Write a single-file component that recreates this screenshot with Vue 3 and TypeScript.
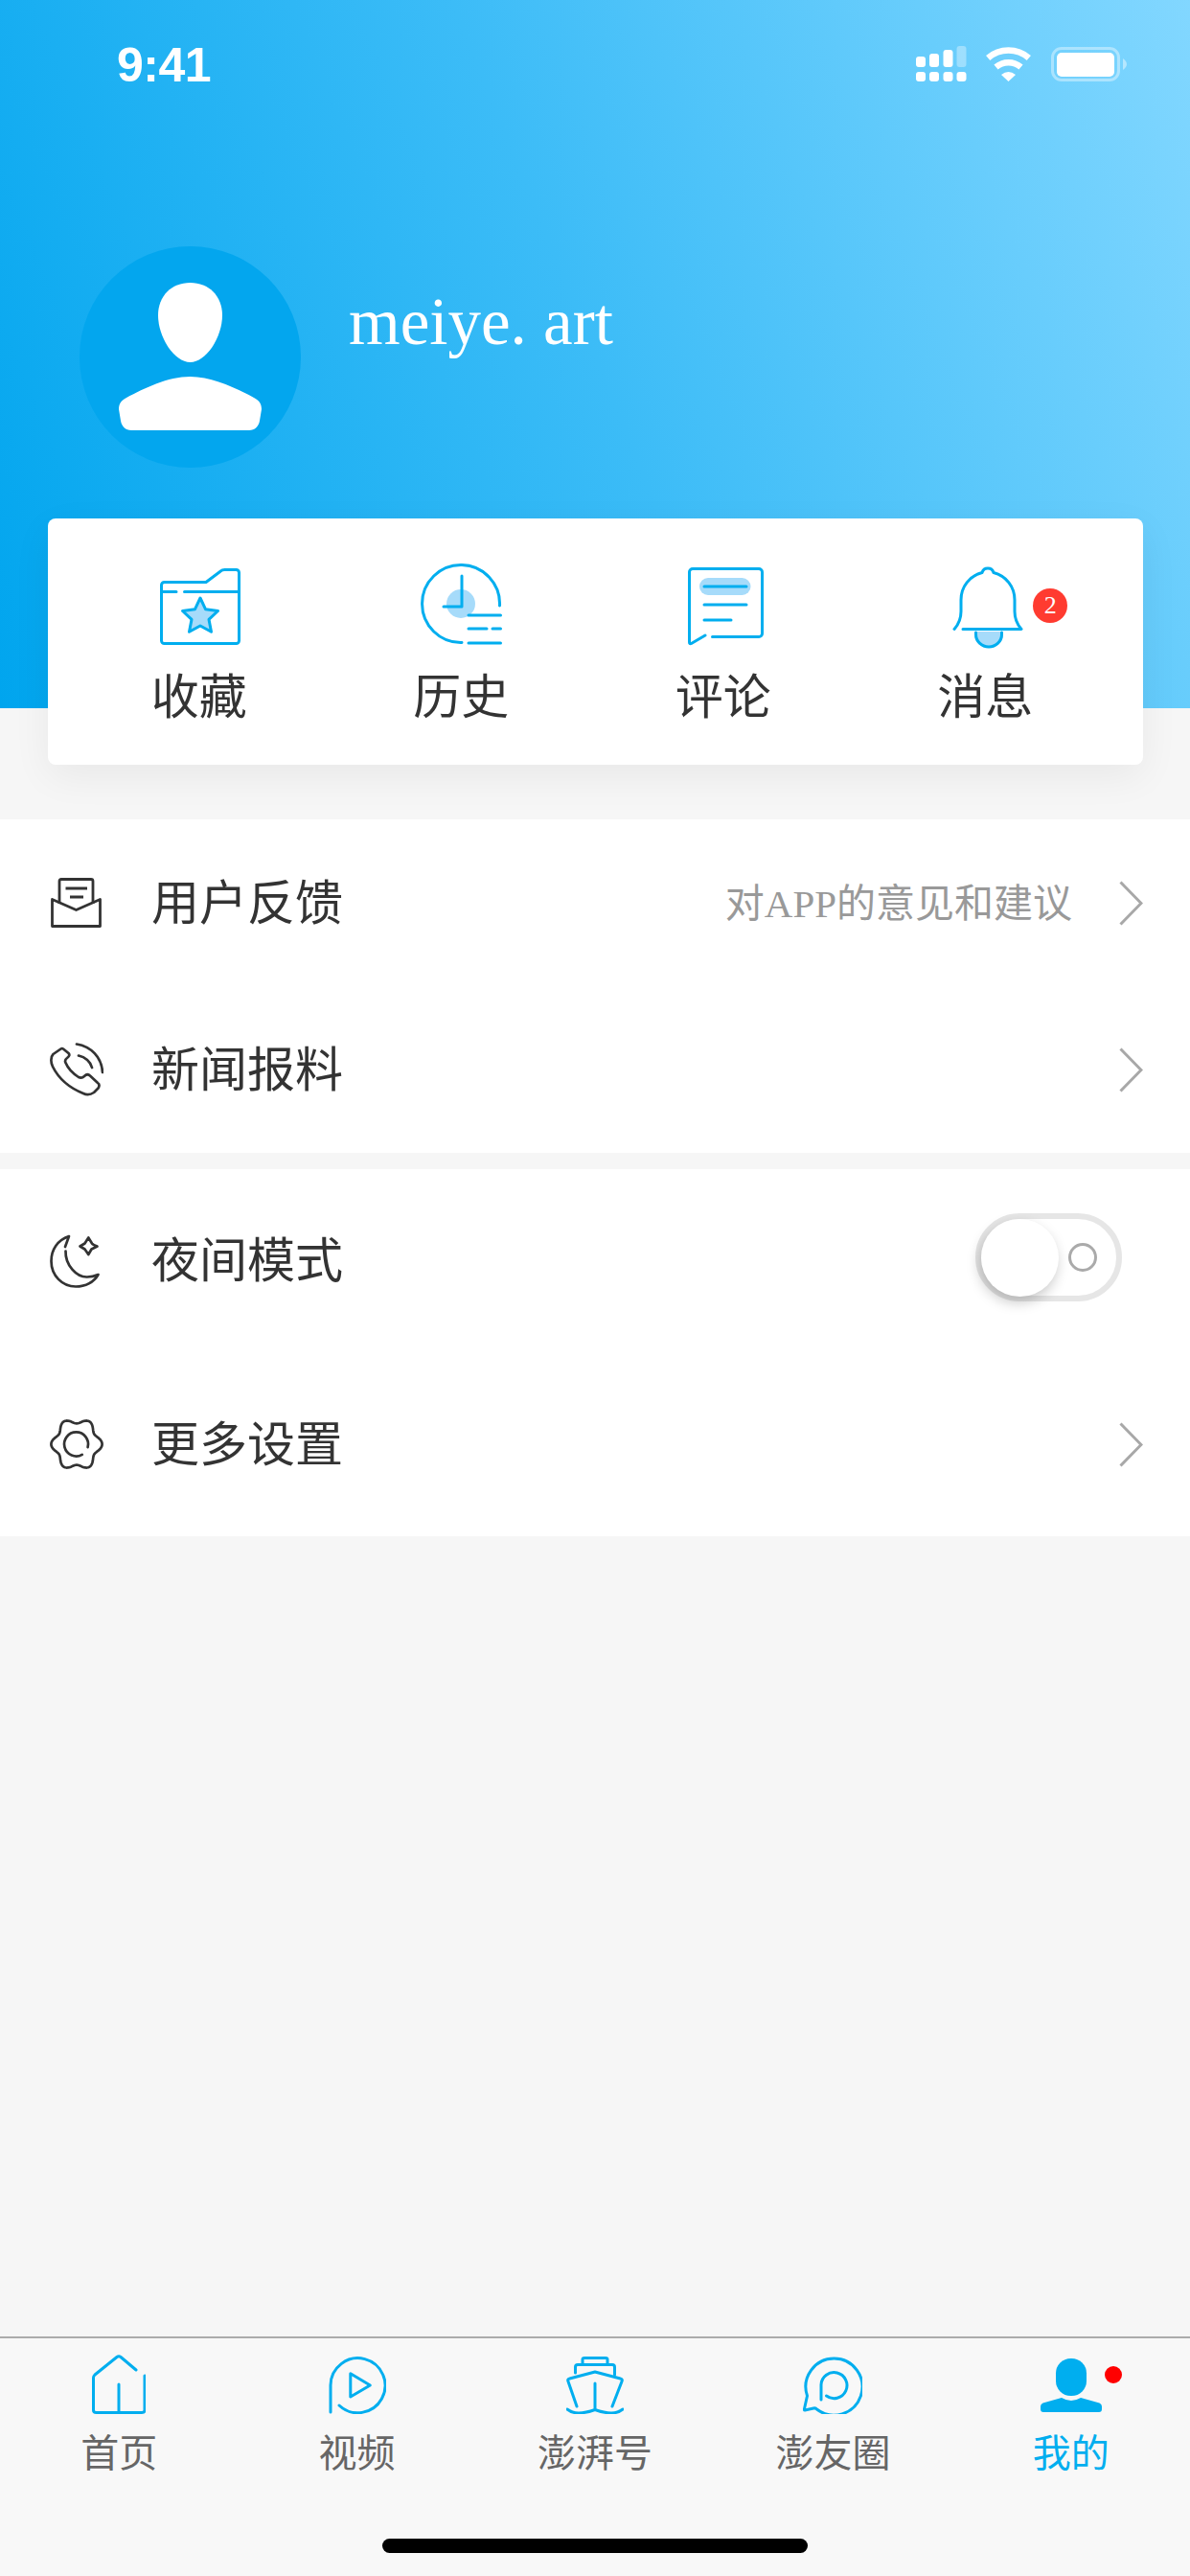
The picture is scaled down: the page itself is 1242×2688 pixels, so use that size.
<script setup lang="ts">
const gearPath: string = (() => {
  const pts: string[] = []
  for (let i = 0; i < 120; i++) {
    const t = (i / 120) * Math.PI * 2
    const r = 23.8 + 2.8 * Math.cos(6 * t)
    pts.push(`${(27 + r * Math.cos(t)).toFixed(2)} ${(26 + r * Math.sin(t) * 1.03).toFixed(2)}`)
  }
  return 'M' + pts.join('L') + 'Z'
})()
</script>

<template>
  <div class="page">
    <header class="hero">
      <div class="status">
        <span class="time">9:41</span>
        <div class="status-icons">
          <svg width="53" height="38" viewBox="0 0 53 38" class="i-signal">
            <g fill="#fff">
              <rect x="0" y="11" width="10" height="11" rx="3" />
              <rect x="14" y="8" width="10" height="14" rx="3" />
              <rect x="28.5" y="4" width="10" height="18" rx="3" />
              <rect x="42.5" y="0" width="10" height="22" rx="3" opacity=".35" />
              <rect x="0" y="27" width="10" height="10" rx="3" />
              <rect x="14" y="27" width="10" height="10" rx="3" />
              <rect x="28.5" y="27" width="10" height="10" rx="3" />
              <rect x="42.5" y="27" width="10" height="10" rx="3" />
            </g>
          </svg>
          <svg width="47" height="36" viewBox="0 0 47 36" class="i-wifi">
            <path d="M2.2 11.5A32.5 32.5 0 0 1 44.8 11.5M10.5 21A20 20 0 0 1 36.5 21" fill="none" stroke="#fff" stroke-width="6.5" />
            <path d="M16 29Q23.5 23 31 29L23.5 36Z" fill="#fff" />
          </svg>
          <svg width="80" height="36" viewBox="0 0 80 36" class="i-batt">
            <rect x="1.5" y="1.5" width="69" height="33" rx="9.5" fill="none" stroke="#fff" stroke-opacity=".4" stroke-width="3" />
            <rect x="6" y="6" width="60" height="25" rx="5" fill="#fff" />
            <path d="M75 12Q79 15 79 18Q79 21 75 24Z" fill="#fff" fill-opacity=".45" />
          </svg>
        </div>
      </div>
      <div class="profile">
        <div class="avatar">
          <svg width="231" height="231" viewBox="0 0 231 231">
            <path fill="#fff" d="M115.5 38C135 38 149 52 149 72C149 95 132 121 115.5 121C99 121 82 95 82 72C82 52 96 38 115.5 38Z" />
            <path fill="#fff" d="M115.5 136C92 136 68 148 49 158C43 161 41 165 41 170L43 182C44 188 48 192 54 192H177C183 192 187 188 188 182L190 170C190 165 188 161 182 158C163 148 139 136 115.5 136Z" />
          </svg>
        </div>
        <div class="name">meiye. art</div>
      </div>
    </header>

    <section class="card">
      <div class="card-item">
        <svg class="card-icon" width="86" height="90" viewBox="-2 -5 86 90" fill="none" stroke="#00aeef" stroke-width="3" stroke-linecap="round" stroke-linejoin="round">
          <path d="M4.5 14.5H48L63 3.2Q65 1.5 67.5 1.5H79.5A3 3 0 0 1 82.5 4.5V75.5A3 3 0 0 1 79.5 78.5H4.5A3 3 0 0 1 1.5 75.5V17.5A3 3 0 0 1 4.5 14.5Z" />
          <path d="M1.5 24.5H17M25.5 24.5H82.5" />
          <path fill="#a6dbfa" d="M42 31L47.6 42.8L60.5 44.5L51 53.4L53.5 66.3L42 60L30.5 66.3L33 53.4L23.5 44.5L36.4 42.8Z" />
        </svg>
        <span class="card-label">收藏</span>
      </div>
      <div class="card-item">
        <svg class="card-icon" width="85" height="90" viewBox="0 0 85 90" fill="none" stroke="#00aeef" stroke-width="3" stroke-linecap="round">
          <circle cx="42" cy="42" r="15" fill="#a6dbfa" stroke="none" />
          <path d="M82.5 44A40.5 40.5 0 1 0 43 82.5" />
          <path d="M43 13V45H24" stroke-linejoin="round" />
          <path d="M50 54H83.5M50 68H69M75 68H83.5M50 83H83.5" />
        </svg>
        <span class="card-label">历史</span>
      </div>
      <div class="card-item">
        <svg class="card-icon" width="86" height="90" viewBox="-6 -4 86 90" fill="none" stroke="#00aeef" stroke-width="3" stroke-linecap="round" stroke-linejoin="round">
          <rect x="12" y="11" width="53.5" height="18" rx="9" fill="#a6dbfa" stroke="none" />
          <path d="M25.5 72.5H74A3.5 3.5 0 0 0 77.5 69V5A3.5 3.5 0 0 0 74 1.5H5A3.5 3.5 0 0 0 1.5 5V78Q1.5 80.5 3.5 79.5L18 71" />
          <path d="M17 20H61M17 39H61M17 55H45" />
        </svg>
        <span class="card-label">评论</span>
      </div>
      <div class="card-item">
        <div class="bell-wrap">
          <svg class="card-icon" width="84" height="90" viewBox="-8 0 84 90" fill="none" stroke="#00aeef" stroke-width="3" stroke-linecap="round" stroke-linejoin="round">
            <path fill="#a6dbfa" stroke="none" d="M23 71H53V74A15 14 0 0 1 23 74Z" />
            <path d="M24.5 72V74A13.5 13 0 0 0 51.5 74V72" />
            <path d="M2 68.5C6 64 9 58 9 50V38C9 24 18 13 31 9.5A6.3 6.3 0 0 1 43 9.5C56 13 65 24 65 38V50C65 58 68 64 72 68.5H11" />
          </svg>
          <span class="badge">2</span>
        </div>
        <span class="card-label">消息</span>
      </div>
    </section>

    <section class="group group-a">
      <div class="row row-a">
        <svg class="row-icon" width="56" height="56" viewBox="-1 -2 56 56" fill="none" stroke="#333" stroke-width="2.8" stroke-linejoin="round">
          <path d="M1.5 22.5L26.5 33.5L51.5 22.5V50.5H1.5Z" />
          <path d="M9 27V3.5Q9 1.5 11 1.5H42Q44 1.5 44 3.5V27" />
          <path d="M15.5 11H38M20 20H34" />
        </svg>
        <span class="row-label">用户反馈</span>
        <span class="row-sub">对APP的意见和建议</span>
        <svg class="chev" width="25" height="47" viewBox="0 0 25 47"><path d="M1.5 1.5L23 23.5L1.5 45.5" fill="none" stroke="#a8a8a8" stroke-width="3" /></svg>
      </div>
      <div class="row row-a">
        <svg class="row-icon" width="56" height="56" viewBox="0 0 56 56" fill="none" stroke="#333" stroke-width="2.7" stroke-linecap="round" stroke-linejoin="round">
          <path d="M11.5 6.5L3.5 12C.5 15 1 21 3 25C9 37 20 47 35 53C39 55 43 54 46 52L50.5 47.5C52 45 51.5 43 50 42L42 34.5C40 32.5 38 33 36 35C34 37 32 37 30 36C24 32 19 27 16.5 21C15.5 19 16 17.5 18 16C20.5 14 21 12.5 19.5 11L14 6.5C13 5.8 12.5 5.8 11.5 6.5Z" />
          <path d="M28 1.5C43 4 54 15 55 31M30 13.5C37 15 42.5 20 44 26" />
        </svg>
        <span class="row-label">新闻报料</span>
        <svg class="chev chev-end" width="25" height="47" viewBox="0 0 25 47"><path d="M1.5 1.5L23 23.5L1.5 45.5" fill="none" stroke="#a8a8a8" stroke-width="3" /></svg>
      </div>
    </section>

    <section class="group group-b">
      <div class="row row-b">
        <svg class="row-icon" width="56" height="56" viewBox="0 0 56 56" fill="none" stroke="#333" stroke-width="2.7" stroke-linecap="round" stroke-linejoin="round">
          <path d="M16 13L20 2C8 6 1.5 16 1.5 28C1.5 43 13 54.5 27 54.5C37 54.5 46 50 50.5 42C47 43.5 43 44.5 39 44.5C28 45 16 32 16.5 17.5" />
          <path d="M40.3 3.5L44 9.5Q45 11 49.5 12.5L43.5 15.5L40.3 21L36.5 15.5L31.5 12.5L36.5 9.5Z" />
        </svg>
        <span class="row-label">夜间模式</span>
        <div class="toggle">
          <div class="knob"></div>
          <div class="toggle-o"></div>
        </div>
      </div>
      <div class="row row-b">
        <svg class="row-icon" width="56" height="56" viewBox="-1 -2 56 56" fill="none" stroke="#333" stroke-width="2.7" stroke-linecap="round" stroke-linejoin="round">
          <path :d="gearPath" />
          <path d="M38.6 29.2A12.5 12.5 0 1 0 32.75 36.8" />
        </svg>
        <span class="row-label">更多设置</span>
        <svg class="chev chev-end" width="25" height="47" viewBox="0 0 25 47"><path d="M1.5 1.5L23 23.5L1.5 45.5" fill="none" stroke="#a8a8a8" stroke-width="3" /></svg>
      </div>
    </section>

    <footer class="tabbar">
      <nav class="tabs">
        <div class="tab">
          <svg width="56" height="62" viewBox="0 0 56 62" fill="none" stroke="#00aeef" stroke-width="3" stroke-linecap="round" stroke-linejoin="round">
            <path d="M46 16L30 2.5Q28 1 26 2.5L3 21Q1.5 22.5 1.5 24V58Q1.5 60.5 4.5 60.5H52Q55 60.5 55 58V22" />
            <path d="M28 31V60" />
          </svg>
          <span class="tab-label">首页</span>
        </div>
        <div class="tab">
          <svg width="60" height="62" viewBox="0 -2 60 62" fill="none" stroke="#00aeef" stroke-width="3" stroke-linecap="round" stroke-linejoin="round">
            <path d="M2 58V30A28.5 28.5 0 1 1 11 51" />
            <path d="M22.8 17.7L43.3 30L22.8 42Z" />
          </svg>
          <span class="tab-label">视频</span>
        </div>
        <div class="tab">
          <svg width="60" height="62" viewBox="0 -2 60 62" fill="none" stroke="#00aeef" stroke-width="3" stroke-linecap="round" stroke-linejoin="round">
            <path d="M11 52L2 26Q1 23.5 3.5 23L30 16L56.5 23Q59 23.5 58 26L48 52" />
            <path d="M9.5 17V11Q9.5 8.5 12 8.5H48Q50.5 8.5 50.5 11V19" />
            <path d="M17 8V3Q17 1.5 19 1.5H41Q43 1.5 43 3V8" />
            <path d="M30 28V54" />
            <path d="M1 55Q6 59 13 59Q20 59 30 55.5Q40 59 47 59Q54 59 59 55" />
          </svg>
          <span class="tab-label">澎湃号</span>
        </div>
        <div class="tab">
          <svg width="62" height="62" viewBox="0 -2 62 62" fill="none" stroke="#00aeef" stroke-width="3" stroke-linecap="round" stroke-linejoin="round">
            <path d="M4.5 41A29.5 29.5 0 1 1 14.5 55Q13.5 53.5 11 54L2 56Q1 56 1.5 54.5Z" />
            <path d="M19 45V29.5A13.5 13.5 0 1 1 24.5 41" />
          </svg>
          <span class="tab-label">澎友圈</span>
        </div>
        <div class="tab">
          <svg width="64" height="62" viewBox="0 -4 64 62" fill="#00aeef">
            <rect x="16" y="0" width="32" height="39" rx="15.5" />
            <path d="M0 50Q0 47.5 2.5 46.5L22 41Q32 47 42 41L61.5 46.5Q64 47.5 64 50V53Q64 56 61 56H3Q0 56 0 53Z" />
          </svg>
          <span class="tab-dot"></span>
          <span class="tab-label active">我的</span>
        </div>
      </nav>
      <div class="home-bar"></div>
    </footer>
  </div>
</template>

<style scoped>
.page {
  width: 1242px;
  height: 2688px;
  display: flex;
  flex-direction: column;
  background: #f6f6f6;
  overflow: hidden;
  font-family: "Liberation Serif", "Noto Sans CJK SC", serif;
  color: #333;
}
.hero {
  height: 739px;
  flex: none;
  background: linear-gradient(68deg, #00a5ee 0%, #3cbcf7 50%, #82d7ff 100%);
}
.status {
  height: 136px;
  display: flex;
  align-items: center;
  justify-content: space-between;
  padding: 0 65px 0 122px;
}
.time {
  font-family: "Liberation Sans", sans-serif;
  font-weight: 700;
  font-size: 50px;
  letter-spacing: -.5px;
  color: #fff;
}
.status-icons {
  display: flex;
  align-items: flex-start;
  height: 38px;
  margin-top: -2px;
}
.status-icons svg { display: block; }
.i-signal { margin-right: 20px; }
.i-wifi { margin-top: 1px; margin-right: 21px; }
.i-batt { margin-top: 1px; }
.profile {
  display: flex;
  align-items: flex-start;
  margin-top: 121px;
  padding-left: 83px;
}
.avatar {
  width: 231px;
  height: 231px;
  border-radius: 50%;
  background: #03a6ee;
}
.avatar svg { display: block; }
.name {
  margin: 39px 0 0 50px;
  font-size: 69px;
  line-height: 80px;
  color: #fff;
}
.card {
  position: relative;
  width: 1143px;
  height: 257px;
  flex: none;
  margin: -198px 0 0 50px;
  box-sizing: border-box;
  padding: 47px 28px 0 21px;
  display: grid;
  grid-template-columns: repeat(4, 1fr);
  background: #fff;
  border-radius: 8px;
  box-shadow: 0 12px 40px rgba(0, 0, 0, .06);
}
.card-item {
  display: flex;
  flex-direction: column;
  align-items: center;
}
.card-icon { display: block; }
.bell-wrap { position: relative; }
.badge {
  position: absolute;
  left: 92px;
  top: 26px;
  width: 36px;
  height: 36px;
  border-radius: 50%;
  background: #ff3b30;
  color: #fff;
  font-size: 26px;
  line-height: 36px;
  text-align: center;
}
.card-label {
  margin-top: 25px;
  font-size: 50px;
  line-height: 50px;
}
.group {
  flex: none;
  background: #fff;
}
.group-a { margin-top: 57px; }
.group-b { margin-top: 17px; }
.row {
  display: flex;
  align-items: center;
  padding: 0 49px 0 52px;
}
.row-a { height: 174px; }
.row-b { height: 191.5px; }
.row-icon { display: block; flex: none; margin-right: 50px; }
.row-label {
  font-size: 50px;
  line-height: 56px;
  margin-top: 1px;
}
.row-sub {
  margin-left: auto;
  margin-right: 49px;
  margin-bottom: 6px;
  font-size: 41px;
  color: #999;
}
.chev { display: block; flex: none; }
.chev-end { margin-left: auto; }
.toggle {
  position: relative;
  margin: 0 22px 8px auto;
  width: 153px;
  height: 92px;
  box-sizing: border-box;
  border: 6px solid #e6e6e6;
  border-radius: 46px;
  display: flex;
  align-items: center;
  justify-content: flex-end;
  padding-right: 20px;
}
.knob {
  position: absolute;
  left: 0;
  top: 0;
  width: 81px;
  height: 81px;
  border-radius: 50%;
  background: #fff;
  box-shadow: -2px 6px 14px rgba(0, 0, 0, .22);
}
.toggle-o {
  width: 30px;
  height: 30px;
  box-sizing: border-box;
  border: 3px solid #aaa;
  border-radius: 50%;
}
.tabbar {
  margin-top: auto;
  height: 250px;
  box-sizing: border-box;
  flex: none;
  background: #f8f8f8;
  border-top: 2px solid #ababab;
  padding-top: 17px;
  display: flex;
  flex-direction: column;
  align-items: center;
}
.tabs {
  width: 100%;
  display: grid;
  grid-template-columns: repeat(5, 1fr);
}
.tab {
  position: relative;
  display: flex;
  flex-direction: column;
  align-items: center;
}
.tab svg { display: block; }
.tab-label {
  margin-top: 22px;
  font-size: 40px;
  line-height: 40px;
  color: #666;
}
.tab-label.active { color: #00aeef; }
.tab-dot {
  position: absolute;
  left: calc(50% + 35px);
  top: 12px;
  width: 18px;
  height: 18px;
  border-radius: 50%;
  background: #ff0000;
}
.home-bar {
  width: 444px;
  height: 15px;
  margin-top: 68px;
  border-radius: 8px;
  background: #000;
}
</style>
